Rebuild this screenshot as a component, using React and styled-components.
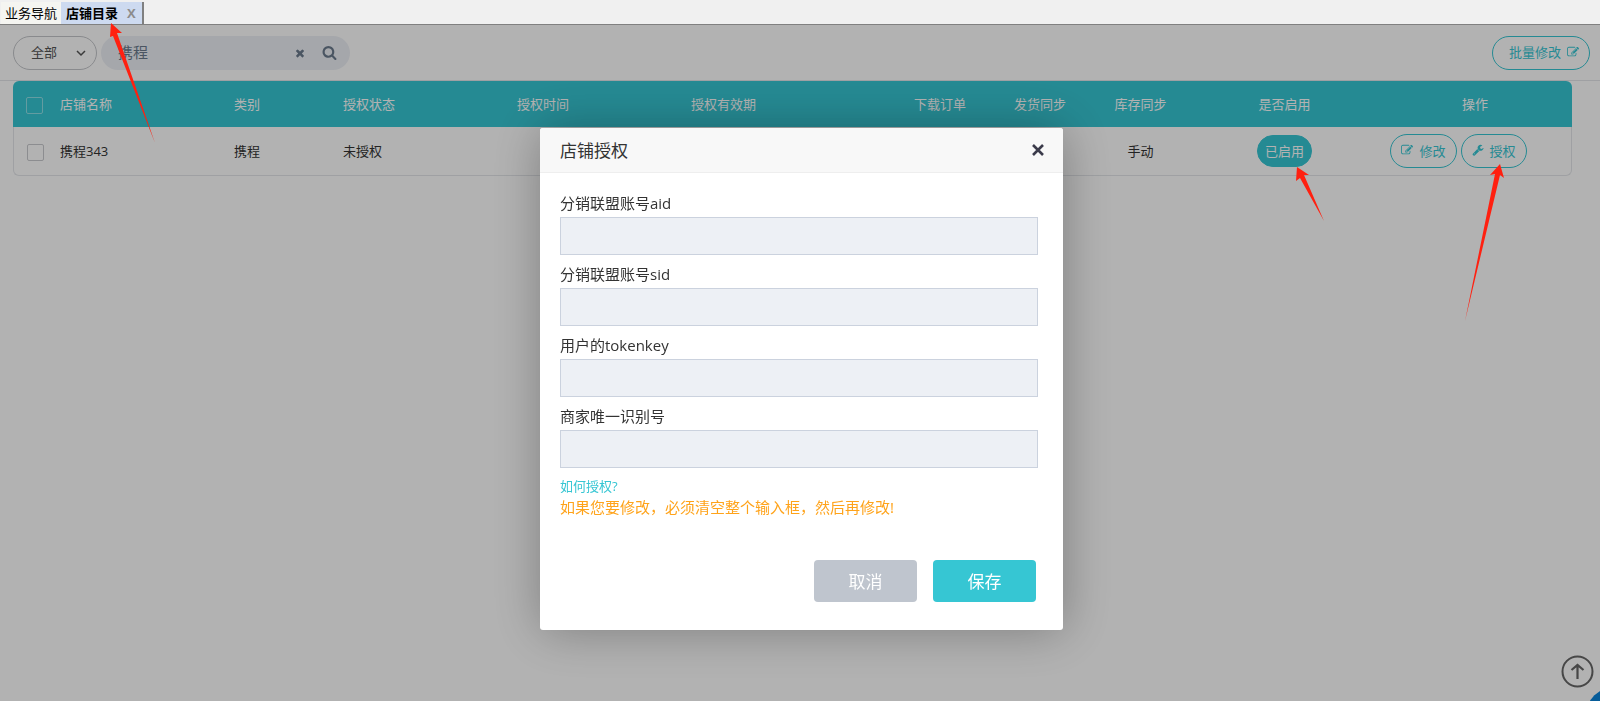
import { useState } from "react";
import styled, { createGlobalStyle, css, ThemeProvider } from "styled-components";

const theme = {
  colors: {
    primary: "#36c6d3",
    text: "#333",
    muted: "#6b7a8d",
    line: "#e4e6ea",
    field: "#edf0f5",
    fieldBorder: "#cbd2de",
    cancel: "#bfc5ce",
    warning: "#ffa31a",
    mark: "#ff2010",
  },
  sizes: { sm: "13px", md: "15px", lg: "17px" },
};

const GlobalStyle = createGlobalStyle`
  *, *::before, *::after {
    box-sizing: border-box;
  }

  body {
    margin: 0;
    background: #fff;
  }

  body, button, input, select {
    font-family: "Open Sans", "Noto Sans CJK SC", sans-serif;
    color: #333;
  }

  button {
    cursor: pointer;
  }
`;

const Page = styled.div`
  display: flex;
  flex-direction: column;
  min-height: 100vh;
  font-size: ${(props) => props.theme.sizes.sm};
`;

const TabBar = styled.nav`
  display: flex;
  align-items: flex-end;
  height: 25px;
  padding-left: 1px;
  background: #f0f0f0;
  border-bottom: 1px solid #808080;
`;

const TabItem = styled.div`
  position: relative;
  display: flex;
  align-items: center;
  height: 22px;
  padding: 0 4px;
  background: #f5f5f1;

  ${(props) =>
    props.$active &&
    css`
      gap: 9px;
      padding: 0 6px 0 5px;
      background: #cddaf0;
      border-right: 2px solid #808080;
    `}
`;

const TabButton = styled.button`
  padding: 0;
  border: 0;
  background: none;
  color: #000;
  font-size: ${(props) => props.theme.sizes.sm};
  line-height: 20px;
  font-weight: ${(props) => (props.$active ? 700 : 400)};
`;

const TabClose = styled(TabButton)`
  color: #8c8c8c;
  font-weight: 700;
`;

const Toolbar = styled.header`
  display: flex;
  align-items: center;
  gap: 4px;
  height: 56px;
  padding: 0 10px 0 13px;
  border-bottom: 1px solid ${(props) => props.theme.colors.line};
`;

const SelectBox = styled.div`
  display: flex;
  align-items: center;
  width: 84px;
  height: 34px;
  padding-right: 10px;
  border: 1px solid #c4c6ca;
  border-radius: 17px;

  select {
    flex: 1;
    min-width: 0;
    height: 32px;
    padding: 0 0 2px 17px;
    border: 0;
    outline: 0;
    appearance: none;
    background: none;
    color: #555;
    font-size: ${(props) => props.theme.sizes.sm};
  }
`;

const SearchBox = styled.form`
  display: flex;
  align-items: center;
  width: 249px;
  height: 34px;
  padding: 0 13px 0 17px;
  border-radius: 17px;
  background: ${(props) => props.theme.colors.field};

  input {
    flex: 1;
    min-width: 0;
    padding: 0 0 2px;
    border: 0;
    outline: 0;
    background: none;
    color: ${(props) => props.theme.colors.muted};
    font-size: ${(props) => props.theme.sizes.md};
  }
`;

const IconButton = styled.button`
  display: flex;
  align-items: center;
  justify-content: center;
  width: ${(props) => props.$width || 16}px;
  height: 16px;
  padding: 0;
  border: 0;
  background: none;
  color: ${(props) => props.theme.colors.muted};
`;

const Spacer = styled.div`
  flex: 1;
`;

const PillButton = styled.button`
  display: inline-flex;
  align-items: center;
  gap: 6px;
  height: 34px;
  padding: 0 10px 2px;
  border: 1px solid ${(props) => props.theme.colors.primary};
  border-radius: 17px;
  background: none;
  color: ${(props) => props.theme.colors.primary};
  font-size: ${(props) => props.theme.sizes.sm};
  white-space: nowrap;
`;

const BatchButton = styled(PillButton)`
  padding: 0 10px 2px 16px;
`;

const StatusButton = styled(PillButton)`
  height: 32px;
  padding: 0 7px 2px;
  background: ${(props) => props.theme.colors.primary};
  color: #fff;
`;

const Content = styled.main`
  padding: 0 28px 0 13px;
`;

const Table = styled.table`
  width: 100%;
  table-layout: fixed;
  border-spacing: 0;

  th,
  td {
    padding: 0 10px 2px;
    text-align: left;
    font-weight: 400;
    white-space: nowrap;
  }

  th {
    height: 46px;
    background: ${(props) => props.theme.colors.primary};
    color: #fff;
  }

  td {
    height: 49px;
    border-bottom: 1px solid ${(props) => props.theme.colors.line};
  }

  th:first-child,
  td:first-child {
    padding: 2px 0 0 13px;
  }

  th:first-child {
    border-top-left-radius: 6px;
  }

  th:last-child {
    border-top-right-radius: 6px;
  }

  td:first-child {
    border-left: 1px solid ${(props) => props.theme.colors.line};
    border-bottom-left-radius: 6px;
  }

  td:last-child {
    border-right: 1px solid ${(props) => props.theme.colors.line};
    border-bottom-right-radius: 6px;
  }

  th.center,
  td.center {
    text-align: center;
  }

  td.controls {
    padding: 0;
  }
`;

const Checkbox = styled.input.attrs({ type: "checkbox" })`
  display: block;
  width: 17px;
  height: 17px;
  margin: 0;
  appearance: none;
  border: 1px solid ${(props) => (props.$light ? "#8fe0e7" : "#c9cbce")};
  border-radius: 2px;
`;

const Actions = styled.div`
  display: flex;
  justify-content: center;
  gap: 4px;
  margin-right: 32px;
`;

const Anchor = styled.span`
  position: relative;
  display: inline-flex;
  vertical-align: middle;
`;

const Backdrop = styled.div`
  position: fixed;
  inset: 25px 0 0;
  z-index: 10;
  display: flex;
  justify-content: center;
  align-items: flex-start;
  padding: 103px 0 0 3px;
  background: rgba(0, 0, 0, 0.3);
`;

const Dialog = styled.section`
  width: 100%;
  max-width: 523px;
  border-radius: 3px;
  background: #fff;
  box-shadow: 1px 1px 50px rgba(0, 0, 0, 0.3);
`;

const DialogHeader = styled.header`
  display: flex;
  align-items: center;
  justify-content: space-between;
  height: 45px;
  padding: 0 17px 0 20px;
  border-bottom: 1px solid #eee;
  border-radius: 3px 3px 0 0;
  background: #f8f8f8;
`;

const DialogTitle = styled.h2`
  margin: 0;
  padding-bottom: 2px;
  font-size: ${(props) => props.theme.sizes.lg};
  font-weight: 400;
`;

const DialogBody = styled.form`
  padding: 19px 25px 28px 20px;
`;

const Field = styled.div`
  display: flex;
  flex-direction: column;
  margin-bottom: 8px;

  label {
    padding-bottom: 2px;
    font-size: ${(props) => props.theme.sizes.md};
    line-height: 23px;
  }

  input {
    width: 100%;
    height: 38px;
    padding: 0 10px;
    border: 1px solid ${(props) => props.theme.colors.fieldBorder};
    border-radius: 0;
    outline: 0;
    background: ${(props) => props.theme.colors.field};
    font-size: ${(props) => props.theme.sizes.md};
  }
`;

const HelpLink = styled.a`
  display: block;
  color: ${(props) => props.theme.colors.primary};
  font-size: ${(props) => props.theme.sizes.sm};
  line-height: 20px;
  text-decoration: none;
`;

const Warning = styled.p`
  margin: 0;
  color: ${(props) => props.theme.colors.warning};
  font-size: ${(props) => props.theme.sizes.md};
  line-height: 23px;
`;

const DialogFooter = styled.div`
  display: flex;
  justify-content: flex-end;
  gap: 16px;
  margin: 41px 2px 0 0;
`;

const DialogButton = styled.button`
  width: 103px;
  height: 42px;
  padding: 0 0 2px;
  border: 0;
  border-radius: 4px;
  background: ${(props) =>
    props.$primary ? props.theme.colors.primary : props.theme.colors.cancel};
  color: #fff;
  font-size: ${(props) => props.theme.sizes.lg};
`;

const BackToTop = styled.button`
  position: fixed;
  right: 6px;
  bottom: 13px;
  display: flex;
  padding: 0;
  border: 0;
  background: none;
  color: #666;
`;

const HelpBubble = styled.div`
  position: fixed;
  right: -49px;
  bottom: -49px;
  width: 64px;
  height: 64px;
  border-radius: 50%;
  background: #0a84dc;
`;

// sits above the backdrop, hung from the control it points at
const MarkSvg = styled.svg`
  position: absolute;
  left: ${(props) => props.$left}px;
  top: ${(props) => props.$top}px;
  z-index: 20;
  fill: ${(props) => props.theme.colors.mark};
  pointer-events: none;
`;

const Mark = ({ width, height, left, top, points }) => (
  <MarkSvg width={width} height={height} $left={left} $top={top} aria-hidden="true">
    <polygon points={points} />
  </MarkSvg>
);

const icons = {
  edit: "M888 1184l116-116-152-152-116 116v56h96v96h56zm440-720q-16-16-33 1l-350 350q-17 17-1 33t33-1l350-350q17-17 1-33zm80 594v190q0 119-84.5 203.5t-203.5 84.5h-832q-119 0-203.5-84.5t-84.5-203.5v-832q0-119 84.5-203.5t203.5-84.5h832q63 0 117 25 15 7 18 23 3 17-9 29l-49 49q-14 14-32 8-23-6-45-6h-832q-66 0-113 47t-47 113v832q0 66 47 113t113 47h832q66 0 113-47t47-113v-126q0-13 9-22l64-64q15-15 35-7t20 29zm-96-738l288 288-672 672h-288v-288zm444 132l-92 92-288-288 92-92q28-28 68-28t68 28l152 152q28 28 28 68t-28 68z",
  search:
    "M1216 832q0-185-131.5-316.5t-316.5-131.5-316.5 131.5-131.5 316.5 131.5 316.5 316.5 131.5 316.5-131.5 131.5-316.5zm512 832q0 52-38 90t-90 38q-54 0-90-38l-343-342q-179 124-399 124-143 0-273.5-55.5t-225-150-150-225-55.5-273.5 55.5-273.5 150-225 225-150 273.5-55.5 273.5 55.5 225 150 150 225 55.5 273.5q0 220-124 399l343 343q37 37 37 90z",
  wrench:
    "M448 1472q0-26-19-45t-45-19-45 19-19 45 19 45 45 19 45-19 19-45zm644-420l-682 682q-37 37-90 37-52 0-91-37l-106-108q-38-36-38-90 0-53 38-91l681-681q39 98 114.5 173.5t173.5 114.5zm634-435q0 39-23 106-47 134-164.5 217.5t-258.5 83.5q-185 0-316.5-131.5t-131.5-316.5 131.5-316.5 316.5-131.5q58 0 121.5 16.5t107.5 46.5q16 11 16 28t-16 28l-293 169v224l193 107q5-3 79-48.5t135.5-81 70.5-35.5q15 0 23.5 10t8.5 25z",
  times:
    "M1490 1322q0 40-28 68l-136 136q-28 28-68 28t-68-28l-294-294-294 294q-28 28-68 28t-68-28l-136-136q-28-28-28-68t28-68l294-294-294-294q-28-28-28-68t28-68l136-136q28-28 68-28t68 28l294 294 294-294q28-28 68-28t68 28l136 136q28 28 28 68t-28 68l-294 294 294 294q28 28 28 68z",
};

const Icon = ({ name, size = 12 }) => (
  <svg width={size} height={size} viewBox="0 0 1792 1792" fill="currentColor" aria-hidden="true">
    <path d={icons[name]} />
  </svg>
);

const columns = [
  { title: "店铺名称", width: 174 },
  { title: "类别", width: 109 },
  { title: "授权状态", width: 174 },
  { title: "授权时间", width: 174 },
  { title: "授权有效期", width: 209 },
  { title: "下载订单", width: 100, center: true },
  { title: "发货同步", width: 100, center: true },
  { title: "库存同步", width: 101, center: true },
  { title: "是否启用", width: 187, center: true },
  { title: "操作", width: 194, center: true },
];

const fields = [
  { id: "aid", label: "分销联盟账号aid" },
  { id: "sid", label: "分销联盟账号sid" },
  { id: "tokenkey", label: "用户的tokenkey" },
  { id: "merchant", label: "商家唯一识别号" },
];

const ShopTable = () => (
  <Table>
    <colgroup>
      <col width="37" />
      {columns.map((column) => (
        <col key={column.title} width={column.width} />
      ))}
    </colgroup>
    <thead>
      <tr>
        <th>
          <Checkbox $light aria-label="全选" />
        </th>
        {columns.map((column) => (
          <th key={column.title} className={column.center ? "center" : undefined}>
            {column.title}
          </th>
        ))}
      </tr>
    </thead>
    <tbody>
      <tr>
        <td>
          <Checkbox aria-label="携程343" />
        </td>
        <td>携程343</td>
        <td>携程</td>
        <td>未授权</td>
        <td />
        <td />
        <td />
        <td />
        <td className="center">手动</td>
        <td className="center controls">
          <Anchor>
            <StatusButton type="button">已启用</StatusButton>
            <Mark
              width={30}
              height={56}
              left={39}
              top={31}
              points="1,1 13,9 8,9 28,55 4,12 0,15"
            />
          </Anchor>
        </td>
        <td className="controls">
          <Actions>
            <PillButton type="button">
              <Icon name="edit" />
              修改
            </PillButton>
            <Anchor>
              <PillButton type="button">
                <Icon name="wrench" />
                授权
              </PillButton>
              <Mark
                width={42}
                height={158}
                left={3}
                top={30}
                points="36,0 40,14 36,11 1,157 31,10 26,11"
              />
            </Anchor>
          </Actions>
        </td>
      </tr>
    </tbody>
  </Table>
);

const AuthDialog = () => (
  <Backdrop>
    <Dialog role="dialog" aria-labelledby="auth-title">
      <DialogHeader>
        <DialogTitle id="auth-title">店铺授权</DialogTitle>
        <IconButton type="button" aria-label="关闭">
          <svg width="14" height="14" viewBox="0 0 14 14" aria-hidden="true">
            <path d="M2 2l10 10M12 2L2 12" stroke="#3b3b4b" strokeWidth="2.6" />
          </svg>
        </IconButton>
      </DialogHeader>
      <DialogBody onSubmit={(e) => e.preventDefault()}>
        {fields.map((field) => (
          <Field key={field.id}>
            <label htmlFor={field.id}>{field.label}</label>
            <input id={field.id} type="text" />
          </Field>
        ))}
        <HelpLink href="#help">如何授权?</HelpLink>
        <Warning>如果您要修改，必须清空整个输入框，然后再修改!</Warning>
        <DialogFooter>
          <DialogButton type="button">取消</DialogButton>
          <DialogButton type="submit" $primary>
            保存
          </DialogButton>
        </DialogFooter>
      </DialogBody>
    </Dialog>
  </Backdrop>
);

const App = () => {
  const [keyword, setKeyword] = useState("携程");

  return (
    <ThemeProvider theme={theme}>
      <GlobalStyle />
      <Page>
        <TabBar>
          <TabItem>
            <TabButton type="button">业务导航</TabButton>
          </TabItem>
          <TabItem $active>
            <TabButton type="button" $active>
              店铺目录
            </TabButton>
            <TabClose type="button">X</TabClose>
            <Mark
              width={48}
              height={122}
              left={48}
              top={21}
              points="2,0 13,10 8,10 46,120 4,13 1,14"
            />
          </TabItem>
        </TabBar>
        <Toolbar>
          <SelectBox>
            <select aria-label="类别">
              <option>全部</option>
            </select>
            <svg width="10" height="10" viewBox="0 0 10 10" fill="none" aria-hidden="true">
              <path d="M1 3l4 4 4-4" stroke="#555" strokeWidth="1.5" />
            </svg>
          </SelectBox>
          <SearchBox onSubmit={(e) => e.preventDefault()}>
            <input
              type="text"
              aria-label="搜索"
              value={keyword}
              onChange={(e) => setKeyword(e.target.value)}
            />
            <IconButton type="button" aria-label="清空" $width={42} onClick={() => setKeyword("")}>
              <Icon name="times" />
            </IconButton>
            <IconButton type="submit" aria-label="搜索">
              <Icon name="search" size={15} />
            </IconButton>
          </SearchBox>
          <Spacer />
          <BatchButton type="button">
            批量修改
            <Icon name="edit" />
          </BatchButton>
        </Toolbar>
        <Content>
          <ShopTable />
        </Content>
        <BackToTop type="button" aria-label="返回顶部">
          <svg width="33" height="33" viewBox="0 0 33 33" fill="none" aria-hidden="true">
            <circle cx="16.5" cy="16.5" r="15" stroke="currentColor" strokeWidth="2" />
            <path d="M16.5 24V10M10.500 15l6-5 6 5" stroke="currentColor" strokeWidth="2.2" />
          </svg>
        </BackToTop>
        <HelpBubble />
      </Page>
      <AuthDialog />
    </ThemeProvider>
  );
};

export default App;
